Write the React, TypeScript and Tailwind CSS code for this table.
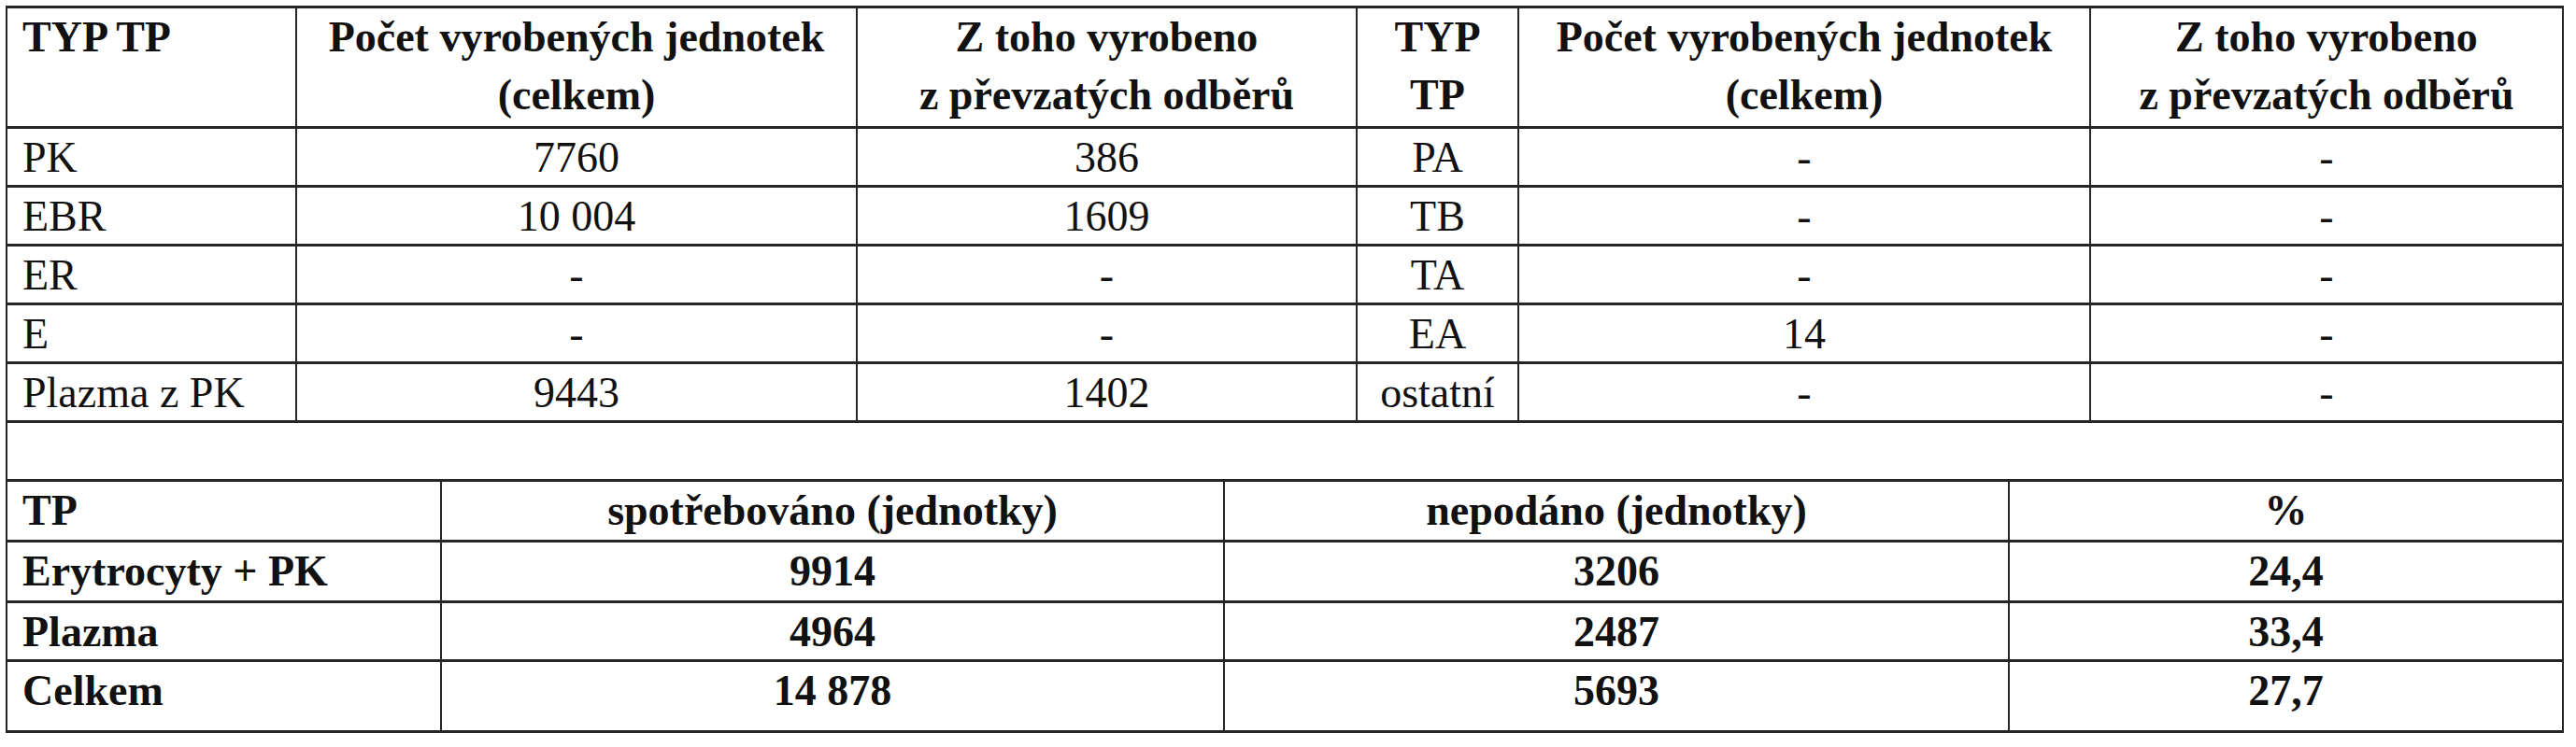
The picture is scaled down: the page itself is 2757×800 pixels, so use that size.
import React from "react";

const topCols = "grid grid-cols-[310px_600px_535px_173px_612px_1fr]";
const botCols = "grid grid-cols-[465px_838px_840px_1fr]";

type TopRow = [string, string, string, string, string, string];

const topRows: TopRow[] = [
  ["PK", "7760", "386", "PA", "-", "-"],
  ["EBR", "10 004", "1609", "TB", "-", "-"],
  ["ER", "-", "-", "TA", "-", "-"],
  ["E", "-", "-", "EA", "14", "-"],
  ["Plazma z PK", "9443", "1402", "ostatní", "-", "-"],
];

const botRows: [string, string, string, string][] = [
  ["Erytrocyty + PK", "9914", "3206", "24,4"],
  ["Plazma", "4964", "2487", "33,4"],
  ["Celkem", "14 878", "5693", "27,7"],
];

const cellR = "border-r-2 border-[#262626]";

export default function App() {
  return (
    <div className="w-[2757px] h-[800px] bg-white text-[#111] font-['Liberation_Serif',serif] text-[46px] leading-[62px]">
      <div className="ml-[6px] pt-[6px]">
        <div className="w-[2738px] border-t-[3px] border-l-2 border-r-2 border-b-[3px] border-[#262626]">
          <div className={`${topCols} h-[129px] border-b-[3px] border-[#262626] font-bold`}>
            <div className={`${cellR} px-[16px]`}>TYP TP</div>
            <div className={`${cellR} text-center`}>
              Počet vyrobených jednotek
              <br />
              (celkem)
            </div>
            <div className={`${cellR} text-center`}>
              Z toho vyrobeno
              <br />
              z převzatých odběrů
            </div>
            <div className={`${cellR} text-center`}>
              TYP
              <br />
              TP
            </div>
            <div className={`${cellR} text-center`}>
              Počet vyrobených jednotek
              <br />
              (celkem)
            </div>
            <div className="text-center">
              Z toho vyrobeno
              <br />
              z převzatých odběrů
            </div>
          </div>
          {topRows.map((r, i) => (
            <div key={i} className={`${topCols} h-[63px] border-b-[3px] border-[#262626]`}>
              <div className={`${cellR} px-[16px] whitespace-nowrap`}>{r[0]}</div>
              <div className={`${cellR} text-center`}>{r[1]}</div>
              <div className={`${cellR} text-center`}>{r[2]}</div>
              <div className={`${cellR} text-center whitespace-nowrap`}>{r[3]}</div>
              <div className={`${cellR} text-center`}>{r[4]}</div>
              <div className="text-center">{r[5]}</div>
            </div>
          ))}
          <div className="h-[63px] border-b-[3px] border-[#262626]" />
          <div className={`${botCols} h-[65px] border-b-[3px] border-[#262626] font-bold`}>
            <div className={`${cellR} px-[16px]`}>TP</div>
            <div className={`${cellR} text-center`}>spotřebováno (jednotky)</div>
            <div className={`${cellR} text-center`}>nepodáno (jednotky)</div>
            <div className="text-center">%</div>
          </div>
          {botRows.map((r, i) => (
            <div
              key={i}
              className={`${botCols} font-bold ${
                i === botRows.length - 1
                  ? "h-[73px]"
                  : i === 0
                  ? "h-[65px] border-b-[3px] border-[#262626]"
                  : "h-[63px] border-b-[3px] border-[#262626]"
              }`}
            >
              <div className={`${cellR} px-[16px] whitespace-nowrap`}>{r[0]}</div>
              <div className={`${cellR} text-center`}>{r[1]}</div>
              <div className={`${cellR} text-center`}>{r[2]}</div>
              <div className="text-center">{r[3]}</div>
            </div>
          ))}
        </div>
      </div>
    </div>
  );
}
